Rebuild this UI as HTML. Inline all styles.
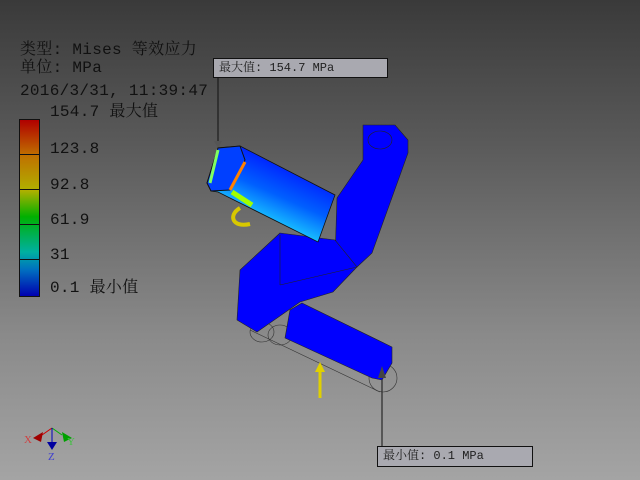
<!DOCTYPE html>
<html><head><meta charset="utf-8"><style>
html,body{margin:0;padding:0}
body{width:640px;height:480px;position:relative;overflow:hidden;background:linear-gradient(#3a3a3a 0%,#5a5a5a 30%,#8a8a8a 70%,#a4a4a4 100%);font-family:"Liberation Mono","Noto Serif CJK SC",monospace;color:#111}
.t{position:absolute;font-size:16px;line-height:16px;white-space:nowrap;letter-spacing:0.3px}
.box{position:absolute;background:#a9a9b0;border:1px solid #111;font-size:12px;line-height:18px;padding-left:5px;box-sizing:border-box;color:#222}
</style></head><body>
<div class="t" style="left:20px;top:42px">类型: Mises 等效应力</div>
<div class="t" style="left:20px;top:60px">单位: MPa</div>
<div class="t" style="left:20px;top:83px">2016/3/31, 11:39:47</div>
<div class="t" style="left:50px;top:104px">154.7 最大值</div>
<div class="t" style="left:50px;top:141px">123.8</div>
<div class="t" style="left:50px;top:177px">92.8</div>
<div class="t" style="left:50px;top:212px">61.9</div>
<div class="t" style="left:50px;top:247px">31</div>
<div class="t" style="left:50px;top:280px">0.1 最小值</div>
<div style="position:absolute;left:19px;top:119px;width:19px;height:176px;border:1px solid #111;background:linear-gradient(#b00000,#c07000 20%,#b0b000 40%,#00b000 55%,#00b0a0 75%,#0070c0 85%,#0000b0)"></div>
<div style="position:absolute;left:19px;top:154px;width:21px;height:1px;background:#111"></div>
<div style="position:absolute;left:19px;top:189px;width:21px;height:1px;background:#111"></div>
<div style="position:absolute;left:19px;top:224px;width:21px;height:1px;background:#111"></div>
<div style="position:absolute;left:19px;top:259px;width:21px;height:1px;background:#111"></div>
<svg width="640" height="480" style="position:absolute;left:0;top:0">
<defs>
<linearGradient id="cg" x1="0" y1="1" x2="0.6" y2="0">
<stop offset="0" stop-color="#a0ffff"/><stop offset="0.3" stop-color="#20e0ff"/><stop offset="0.6" stop-color="#0060ff"/><stop offset="1" stop-color="#0000ff"/>
</linearGradient>
</defs>
<line x1="218" y1="78" x2="218" y2="142" stroke="#111"/>
<polygon points="214,141 222,141 218,148" fill="#555"/>
<line x1="382" y1="372" x2="382" y2="446" stroke="#111"/>
<g fill="none" stroke="#333" stroke-width="0.6">
<ellipse cx="383" cy="378" rx="14" ry="14"/>
<line x1="250" y1="330" x2="380" y2="392"/>
<ellipse cx="262" cy="332" rx="12" ry="10"/>
<ellipse cx="280" cy="335" rx="12" ry="10"/>
</g>
<g fill="#0000ff" stroke="#222" stroke-width="0.6">
<polygon points="363,125 395,125 408,140 408,153 372,253 357,267 335,260 337,198 363,160"/>
<polygon points="280,233 335,240 357,267 333,292 300,302 257,332 237,320 240,270"/>
<polygon points="302,303 392,347 392,363 382,380 372,378 285,338 290,310"/>
</g>
<ellipse cx="380" cy="140" rx="12" ry="9" fill="none" stroke="#222" stroke-width="0.6"/>
<g fill="none" stroke="#222" stroke-width="0.6">
<line x1="280" y1="235" x2="280" y2="285"/>
<line x1="280" y1="285" x2="357" y2="267"/>
</g>
<polygon points="378,378 386,378 382,366" fill="#444"/>
<path d="M240,208 C228,215 232,228 250,224" fill="none" stroke="#d8c800" stroke-width="4"/>
<polygon points="207,183 218,148 240,146 335,195 318,242 218,192 211,191" fill="url(#cg)" stroke="#111" stroke-width="0.8"/>
<polygon points="207,183 218,148 240,146 245,160 230,190 211,191" fill="#0040ff" stroke="#111" stroke-width="1"/>
<path d="M210,183 L218,150" stroke="#80ff60" stroke-width="3" fill="none"/>
<path d="M230,190 L245,162" stroke="#ff8000" stroke-width="3" fill="none"/>
<path d="M232,192 L252,205" stroke="#a0ff00" stroke-width="5" fill="none"/>
<line x1="320" y1="370" x2="320" y2="398" stroke="#e0d000" stroke-width="3"/>
<polygon points="315,372 325,372 320,362" fill="#e0d000"/>
<g>
<line x1="42" y1="435" x2="52" y2="428" stroke="#d00000"/>
<line x1="52" y1="428" x2="62" y2="435" stroke="#00b000"/>
<line x1="52" y1="428" x2="52" y2="445" stroke="#0000c0"/>
<polygon points="33,438 43,432 41,442" fill="#a00000"/>
<polygon points="62,432 72,438 64,442" fill="#00a000"/>
<polygon points="47,442 57,442 52,450" fill="#0000a0"/>
<text x="24" y="443" fill="#d04040" font-size="11" font-family="Liberation Serif">X</text>
<text x="67" y="445" fill="#40c040" font-size="11" font-family="Liberation Serif">Y</text>
<text x="48" y="460" fill="#4040d0" font-size="11" font-family="Liberation Serif">Z</text>
</g>
</svg>
<div class="box" style="left:213px;top:58px;width:175px;height:20px">最大值: 154.7 MPa</div>
<div class="box" style="left:377px;top:446px;width:156px;height:21px">最小值: 0.1 MPa</div>
</body></html>
